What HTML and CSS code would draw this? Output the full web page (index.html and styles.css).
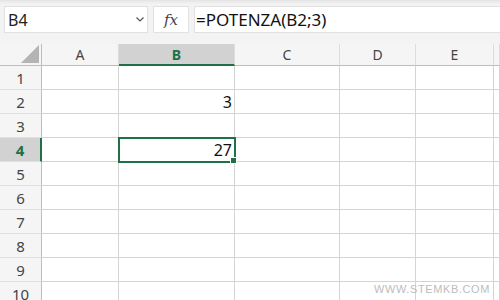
FILE: index.html
```html
<!DOCTYPE html>
<html lang="it">
<head>
  <meta charset="UTF-8" />
  <title>POTENZA</title>
  <link rel="stylesheet" href="styles.css">
</head>
<body>

<div class="topbar">
  <div class="name-box">
    <span>B4</span>
    <svg class="chevron" width="8" height="5" viewBox="0 0 8 5"><polyline points="0.5,0.5 4,4 7.5,0.5" fill="none" stroke="#555" stroke-width="1.2"/></svg>
  </div>
  <div class="fx-box">fx</div>
  <div class="formula">=POTENZA(B2;3)</div>
</div>

<div class="sheet">
  <div class="corner"><div class="triangle"></div></div>
  <div class="col-head">A</div>
  <div class="col-head active">B</div>
  <div class="col-head">C</div>
  <div class="col-head">D</div>
  <div class="col-head">E</div>
  <div class="col-head"></div>

  <div class="row-head">1</div>
  <div class="cell"></div><div class="cell"></div><div class="cell"></div><div class="cell"></div><div class="cell"></div><div class="cell"></div>

  <div class="row-head">2</div>
  <div class="cell"></div><div class="cell num">3</div><div class="cell"></div><div class="cell"></div><div class="cell"></div><div class="cell"></div>

  <div class="row-head">3</div>
  <div class="cell"></div><div class="cell"></div><div class="cell"></div><div class="cell"></div><div class="cell"></div><div class="cell"></div>

  <div class="row-head active">4</div>
  <div class="cell"></div><div class="cell num selected">27</div><div class="cell"></div><div class="cell"></div><div class="cell"></div><div class="cell"></div>

  <div class="row-head">5</div>
  <div class="cell"></div><div class="cell"></div><div class="cell"></div><div class="cell"></div><div class="cell"></div><div class="cell"></div>

  <div class="row-head">6</div>
  <div class="cell"></div><div class="cell"></div><div class="cell"></div><div class="cell"></div><div class="cell"></div><div class="cell"></div>

  <div class="row-head">7</div>
  <div class="cell"></div><div class="cell"></div><div class="cell"></div><div class="cell"></div><div class="cell"></div><div class="cell"></div>

  <div class="row-head">8</div>
  <div class="cell"></div><div class="cell"></div><div class="cell"></div><div class="cell"></div><div class="cell"></div><div class="cell"></div>

  <div class="row-head">9</div>
  <div class="cell"></div><div class="cell"></div><div class="cell"></div><div class="cell"></div><div class="cell"></div><div class="cell"></div>

  <div class="row-head">10</div>
  <div class="cell"></div><div class="cell"></div><div class="cell"></div><div class="cell"></div><div class="cell"></div><div class="cell"></div>
</div>

<div class="watermark">WWW.STEMKB.COM</div>

</body>
</html>
```

FILE: styles.css
```css
body {
  margin: 0;
  width: 500px;
  height: 300px;
  overflow: hidden;
  background: #f5f5f5;
  font-family: 'Noto Sans', 'Open Sans', sans-serif;
  position: relative;
}

.topbar {
  display: flex;
  gap: 5px;
  height: 44px;
  padding: 6px 0 0 4px;
  box-sizing: border-box;
  background: linear-gradient(#e4e4e4 0, #f3f3f3 4px);
}

.name-box,
.fx-box,
.formula {
  height: 27px;
  box-sizing: border-box;
  background: white;
  border: 1px solid #e1e1e1;
  display: flex;
  align-items: center;
  font-size: 16px;
  color: #222;
}

.name-box {
  width: 144px;
  padding: 0 0 0 3px;
  justify-content: space-between;
}

.chevron {
  margin-right: 3px;
}

.fx-box {
  width: 36px;
  justify-content: center;
  font-family: 'DejaVu Serif', 'Liberation Serif', serif;
  font-style: italic;
  font-size: 15px;
  color: #444;
}

.formula {
  flex: 1;
  padding-left: 1px;
  border-right: none;
  font-size: 17px;
  color: #111;
}

.sheet {
  display: grid;
  grid-template-columns: 42px 77px 116px 105px 76px 78px 1fr;
  grid-template-rows: 22px repeat(10, 24px);
  background: white;
}

.corner {
  background: #f5f5f5;
  border-right: 1px solid #bdbdbd;
  border-bottom: 1px solid #bdbdbd;
  display: flex;
  align-items: flex-start;
  justify-content: flex-end;
  padding: 1px 2px 0 0;
}

.triangle {
  width: 0;
  height: 0;
  border-left: 18px solid transparent;
  border-bottom: 18px solid #b4b4b4;
}

.col-head {
  background: #f5f5f5;
  border-right: 1px solid #dcdcdc;
  border-bottom: 1px solid #bdbdbd;
  display: flex;
  align-items: center;
  justify-content: center;
  font-size: 14px;
  color: #444;
}

.col-head.active {
  background: #d2d2d2;
  color: #1e7145;
  font-weight: bold;
  border-bottom: 2px solid #1e7145;
}

.row-head {
  background: #f5f5f5;
  border-right: 1px solid #bdbdbd;
  border-bottom: 1px solid #e0e0e0;
  display: flex;
  align-items: center;
  justify-content: center;
  font-size: 15px;
  color: #444;
}

.row-head.active {
  background: #d2d2d2;
  color: #1e7145;
  font-weight: bold;
  border-right: 2px solid #1e7145;
}

.cell {
  border-right: 1px solid #d4d4d4;
  border-bottom: 1px solid #d4d4d4;
  font-size: 16px;
  color: #111;
  display: flex;
  align-items: flex-end;
  justify-content: flex-end;
  padding: 0 2px 0 0;
  line-height: 21px;
}

.cell.selected {
  position: relative;
  outline: 2px solid #1e7145;
  outline-offset: -1px;
}

.cell.selected::after {
  content: "";
  position: absolute;
  right: -3px;
  bottom: -3px;
  width: 5px;
  height: 5px;
  background: #1e7145;
  border: 1px solid white;
}

.watermark {
  position: absolute;
  left: 374px;
  top: 283px;
  font-family: 'Liberation Sans', sans-serif;
  font-size: 11px;
  letter-spacing: 0.6px;
  color: #bdbdbd;
}
```
